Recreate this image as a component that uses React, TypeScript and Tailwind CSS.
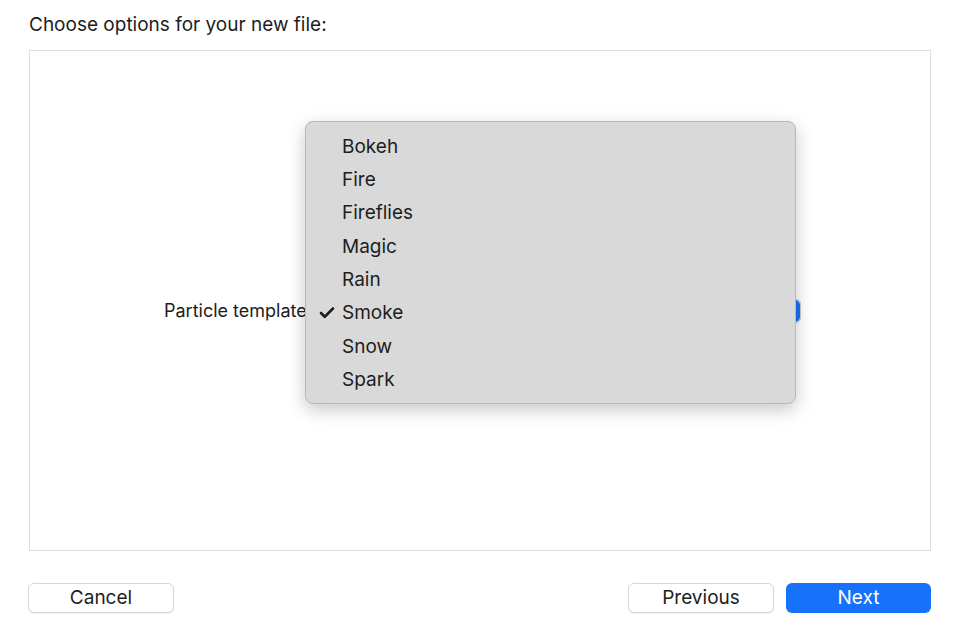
import { Check } from "lucide-react";

const templates = ["Bokeh", "Fire", "Fireflies", "Magic", "Rain", "Smoke", "Snow", "Spark"];

export default function App() {
	const selected = "Smoke";

	return (
		<div
			className="w-[960px] h-[644px] bg-white flex flex-col text-[#1d1d1d] overflow-hidden"
			style={{ fontFamily: "Inter, 'Noto Sans', sans-serif" }}
		>
			<h1 className="pl-[29px] pt-[13px] h-[50px] text-[19px] leading-[24px]">Choose options for your new file:</h1>

			<div className="relative mx-[29px] h-[501px] border border-[#dedede] flex flex-col justify-center pt-[21px]">
				<div className="flex items-center">
					<span className="ml-[134px] text-[18px] leading-[22px] w-[150px] whitespace-nowrap">Particle template</span>
					<div className="ml-[2px] w-[485px] h-[24px] rounded-[5px] border border-[#c9c9c9] bg-white flex justify-end">
						<div className="w-[18px] h-full rounded-r-[5px] bg-[#1671fb]" />
					</div>
				</div>

				{/* open popup menu */}
				<div className="absolute left-[275px] top-[70px] w-[491px] h-[283px] rounded-[8px] bg-[#d9d9d9] border border-[#b8b8b8] shadow-[0_6px_18px_rgba(0,0,0,0.22)] py-[8px]">
					{templates.map((t) => (
						<div key={t} className="relative h-[33.3px] flex items-center pl-[36px] text-[19px] pt-[1px]">
							{t === selected && (
								<Check className="absolute left-[12px] top-[8px] w-[18px] h-[18px]" strokeWidth={3.5} />
							)}
							{t}
						</div>
					))}
				</div>
			</div>

			<div className="flex items-center mt-[32px] pl-[28px] pr-[29px]">
				<button className="w-[146px] h-[30px] rounded-[6px] border border-[#d6d6d6] bg-white shadow-[0_1px_1px_rgba(0,0,0,0.06)] text-[19px]">
					Cancel
				</button>
				<div className="flex-1" />
				<button className="w-[146px] h-[30px] rounded-[6px] border border-[#d6d6d6] bg-white shadow-[0_1px_1px_rgba(0,0,0,0.06)] text-[19px]">
					Previous
				</button>
				<button className="ml-[12px] w-[145px] h-[30px] rounded-[6px] bg-[#1671fb] text-white text-[19px]">
					Next
				</button>
			</div>
		</div>
	);
}
